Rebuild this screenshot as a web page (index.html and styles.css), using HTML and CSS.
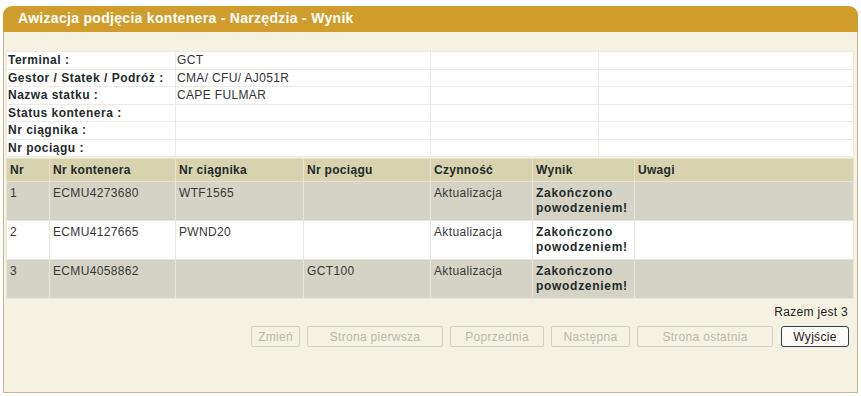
FILE: index.html
```html
<!DOCTYPE html>
<html lang="pl">
<head>
<meta charset="utf-8">
<title>Awizacja podjęcia kontenera - Narzędzia - Wynik</title>
<link rel="stylesheet" href="styles.css">
</head>
<body>
<div class="panel">
  <div class="panel-header">Awizacja podjęcia kontenera - Narzędzia - Wynik</div>
  <div class="panel-body">
    <table class="info">
      <colgroup><col class="c1"><col class="c2"><col class="c3"><col></colgroup>
      <tr><th>Terminal :</th><td>GCT</td><td></td><td></td></tr>
      <tr><th>Gestor / Statek / Podróż :</th><td>CMA/ CFU/ AJ051R</td><td></td><td></td></tr>
      <tr><th>Nazwa statku :</th><td>CAPE FULMAR</td><td></td><td></td></tr>
      <tr><th>Status kontenera :</th><td></td><td></td><td></td></tr>
      <tr><th>Nr ciągnika :</th><td></td><td></td><td></td></tr>
      <tr><th>Nr pociągu :</th><td></td><td></td><td></td></tr>
    </table>
    <table class="grid">
      <colgroup>
        <col class="g1"><col class="g2"><col class="g3"><col class="g4"><col class="g5"><col class="g6"><col>
      </colgroup>
      <thead>
        <tr><th>Nr</th><th>Nr kontenera</th><th>Nr ciągnika</th><th>Nr pociągu</th><th>Czynność</th><th>Wynik</th><th>Uwagi</th></tr>
      </thead>
      <tbody>
        <tr class="odd"><td>1</td><td>ECMU4273680</td><td>WTF1565</td><td></td><td>Aktualizacja</td><td class="res">Zakończono powodzeniem!</td><td></td></tr>
        <tr class="even"><td>2</td><td>ECMU4127665</td><td>PWND20</td><td></td><td>Aktualizacja</td><td class="res">Zakończono powodzeniem!</td><td></td></tr>
        <tr class="odd"><td>3</td><td>ECMU4058862</td><td></td><td>GCT100</td><td>Aktualizacja</td><td class="res">Zakończono powodzeniem!</td><td></td></tr>
      </tbody>
    </table>
    <div class="total">Razem jest 3</div>
    <div class="buttons">
      <button class="btn" disabled>Zmień</button>
      <button class="btn w-first" disabled>Strona pierwsza</button>
      <button class="btn w-prev" disabled>Poprzednia</button>
      <button class="btn w-next" disabled>Następna</button>
      <button class="btn w-last" disabled>Strona ostatnia</button>
      <button class="btn exit">Wyjście</button>
    </div>
  </div>
</div>
</body>
</html>
```

FILE: styles.css
```css
html, body {
  margin: 0;
  padding: 0;
  background: #ffffff;
}
body {
  font-family: "Liberation Sans", Arial, sans-serif;
  font-size: 12px;
  color: #1f2a2a;
}
.panel {
  margin: 6px 0 0 3px;
  width: 855px;
}
.panel-header {
  height: 26px;
  line-height: 25px;
  background: #d09d2c;
  border-radius: 9px 9px 0 0;
  color: #ffffff;
  font-weight: bold;
  font-size: 14px;
  padding-left: 15px;
  letter-spacing: 0.3px;
}
.panel-body {
  background: #f5f2e3;
  border: 1px solid #c9b98a;
  border-top: none;
  height: 361px;
  padding: 19px 3px 0 2px;
  box-sizing: border-box;
}
.info {
  width: 848px;
  border-collapse: collapse;
  background: #ffffff;
  margin-bottom: 1px;
}
.info col.c1 { width: 169px; }
.info col.c2 { width: 255px; }
.info col.c3 { width: 168px; }
.info th, .info td {
  height: 16.5px;
  padding: 0 1px;
  border: 1px solid #ecebe3;
  text-align: left;
  vertical-align: middle;
  white-space: nowrap;
}
.info th {
  font-weight: bold;
  color: #1f2a2a;
  letter-spacing: 0.5px;
}
.info td {
  color: #333333;
  letter-spacing: 0.35px;
}
.grid {
  width: 848px;
  border-collapse: collapse;
}
.grid col.g1 { width: 43px; }
.grid col.g2 { width: 126px; }
.grid col.g3 { width: 128px; }
.grid col.g4 { width: 127px; }
.grid col.g5 { width: 102px; }
.grid col.g6 { width: 102px; }
.grid th {
  background: #d6d3ae;
  height: 22px;
  text-align: left;
  font-weight: bold;
  padding: 0 3px;
  border: 1px solid #e6e4cf;
  vertical-align: middle;
  letter-spacing: 0.3px;
}
.grid td {
  height: 39px;
  padding: 4px 3px 0;
  box-sizing: border-box;
  vertical-align: top;
  border: 1px solid #e7e6de;
  color: #383838;
  line-height: 15px;
  letter-spacing: 0.35px;
}
.grid tr.odd td { background: #d4d3c5; }
.grid tr.even td { background: #ffffff; }
.grid td.res {
  font-weight: bold;
  color: #1f2a2a;
  letter-spacing: 0.7px;
}
.total {
  text-align: right;
  padding: 6px 6px 0 0;
  height: 20px;
  color: #222222;
  letter-spacing: 0.3px;
}
.buttons {
  display: flex;
  justify-content: flex-end;
  gap: 7px;
  padding-right: 5px;
  padding-top: 1px;
}
.btn {
  font-family: "Liberation Sans", Arial, sans-serif;
  font-size: 12px;
  height: 21px;
  padding: 0 6px;
  background: #f5f2e3;
  border: 1px solid #d2d0c6;
  border-radius: 2px;
  color: #b9b8b0;
  letter-spacing: 0.3px;
}
.w-first { width: 136px; }
.w-prev { width: 94px; }
.w-next { width: 79px; }
.w-last { width: 136px; }
.exit {
  margin-left: 1px;
  width: 68px;
  background: #fbfaf6;
  border: 1px solid #2e3e50;
  color: #1a1a1a;
  border-radius: 3px;
}
```
